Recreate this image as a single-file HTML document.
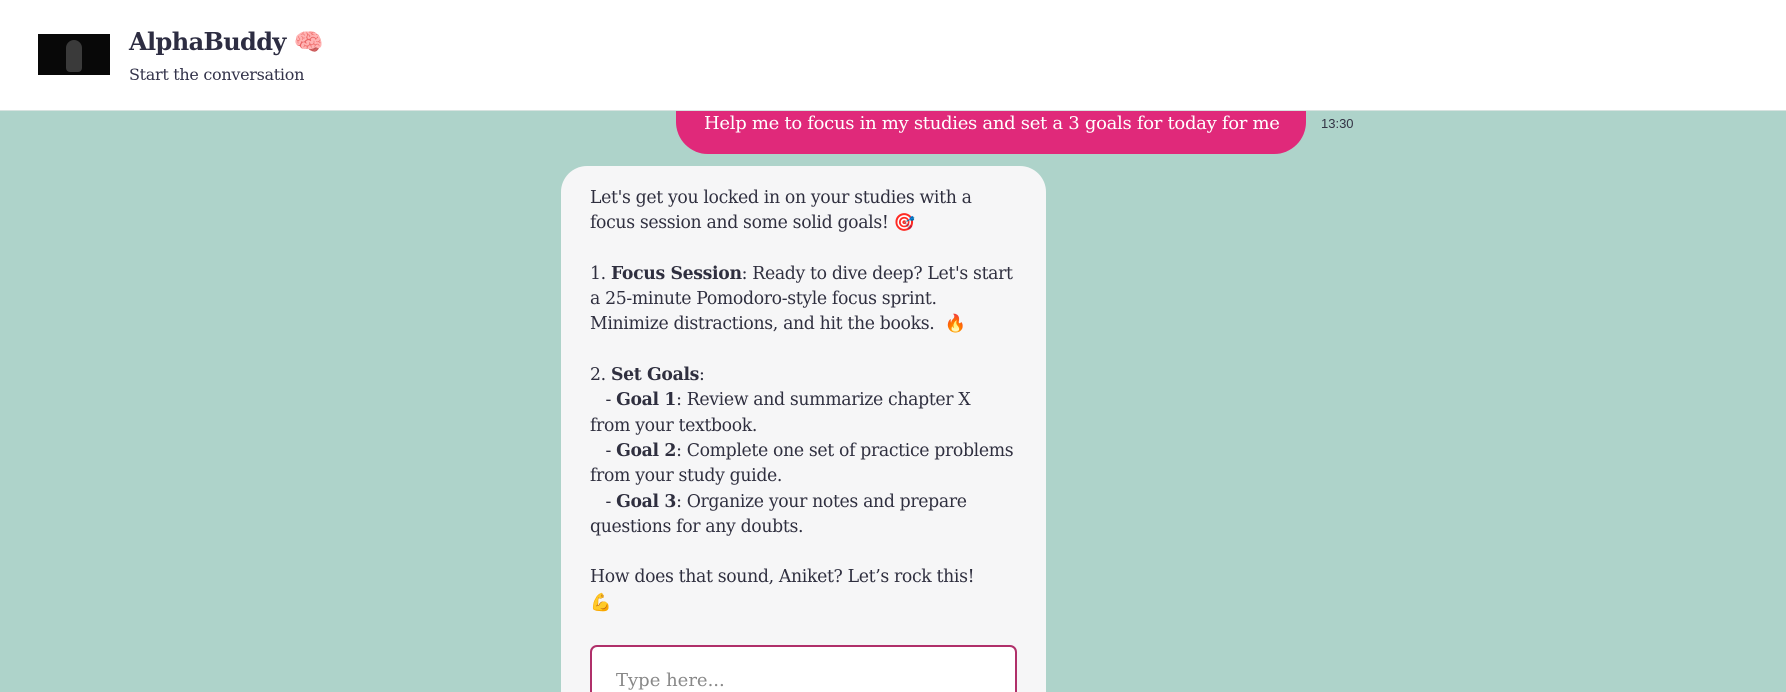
<!DOCTYPE html>
<html><head><meta charset="utf-8"><style>
*{margin:0;padding:0;box-sizing:border-box}
html{width:1786px;height:692px;overflow:hidden}
body{width:1786px;height:692px;overflow:hidden;background:#aed3ca;font-family:"DejaVu Serif","Liberation Serif",serif;color:#2f2f3f;position:relative}
.hdr{position:absolute;left:0;top:0;width:1786px;height:111px;background:#fff;border-bottom:1px solid #d8e3e0;z-index:2}
.av{position:absolute;left:38px;top:34px;width:72px;height:41px;background:#080808}
.av:after{content:"";position:absolute;left:28px;top:6px;width:16px;height:32px;border-radius:8px 8px 4px 4px;background:#3a3a3a}
.t{position:absolute;left:129px;top:27px;font-size:24px;font-weight:bold;color:#2d2d42;letter-spacing:-0.6px}
.s{position:absolute;left:129px;top:65px;font-size:16px;color:#33334a;letter-spacing:-0.3px}
.pink{position:absolute;left:676px;top:60px;width:630px;height:94px;background:#e0297a;border-radius:0 0 32px 32px;color:#fff;font-size:18px}
.pink span{position:absolute;left:28px;top:53px;white-space:nowrap;letter-spacing:-0.3px}
.time{position:absolute;left:1321px;top:116px;font-size:13px;font-family:"Liberation Sans",sans-serif;color:#334}
.rep{position:absolute;left:561px;top:166px;width:485px;height:526px;background:#f6f6f7;border-radius:26px 26px 0 0;overflow:hidden}
.txt{position:absolute;left:29px;top:20px;width:450px;font-size:17.3px;line-height:25.3px;white-space:pre-wrap;letter-spacing:-0.35px}
.inp{position:absolute;left:29px;top:479px;width:427px;height:80px;border:2px solid #b0306a;border-radius:7px;background:#fff}
.inp span{position:absolute;left:24px;top:23px;font-size:18px;color:#888}
</style></head><body>
<div class="hdr"><div class="av"></div><div class="t">AlphaBuddy 🧠</div><div class="s">Start the conversation</div></div>
<div class="pink"><span>Help me to focus in my studies and set a 3 goals for today for  me</span></div>
<div class="time">13:30</div>
<div class="rep"><div class="txt">Let's get you locked in on your studies with a
focus session and some solid goals! 🎯

1. <b>Focus Session</b>: Ready to dive deep? Let's start
a 25-minute Pomodoro-style focus sprint.
Minimize distractions, and hit the books.  🔥

2. <b>Set Goals</b>:
   - <b>Goal 1</b>: Review and summarize chapter X
from your textbook.
   - <b>Goal 2</b>: Complete one set of practice problems
from your study guide.
   - <b>Goal 3</b>: Organize your notes and prepare
questions for any doubts.

How does that sound, Aniket? Let’s rock this!
💪</div>
<div class="inp"><span>Type here...</span></div></div>
</body></html>
